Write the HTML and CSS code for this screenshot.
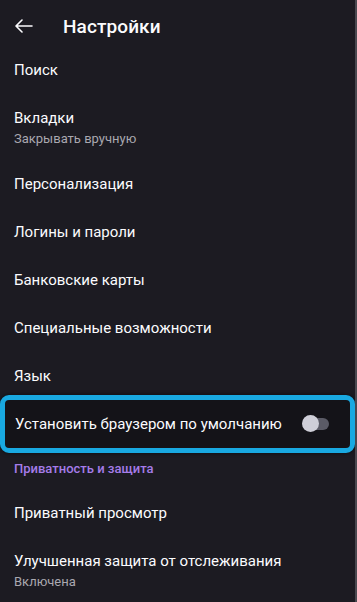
FILE: index.html
```html
<!DOCTYPE html>
<html lang="ru">
<head>
<meta charset="utf-8">
<link rel="stylesheet" href="styles.css">
</head>
<body>
<div class="screen">
  <header class="toolbar">
    <svg class="back" width="18" height="14" viewBox="0 0 18 14" fill="none" stroke="#fbfbfe" stroke-width="1.6" stroke-linecap="round" stroke-linejoin="round">
      <path d="M17 7H1.5M7 1L1 7l6 6"/>
    </svg>
    <h1 class="title">Настройки</h1>
  </header>
  <div class="list">
    <div class="item"><span class="label">Поиск</span></div>
    <div class="item two"><span class="label">Вкладки</span><span class="sub">Закрывать вручную</span></div>
    <div class="item"><span class="label">Персонализация</span></div>
    <div class="item"><span class="label">Логины и пароли</span></div>
    <div class="item"><span class="label">Банковские карты</span></div>
    <div class="item"><span class="label">Специальные возможности</span></div>
    <div class="item"><span class="label">Язык</span></div>
    <div class="item highlight"><span class="label">Установить браузером по умолчанию</span><span class="switch"><span class="track"></span><span class="thumb"></span></span></div>
    <div class="category">Приватность и защита</div>
    <div class="item"><span class="label">Приватный просмотр</span></div>
    <div class="item two"><span class="label">Улучшенная защита от отслеживания</span><span class="sub">Включена</span></div>
  </div>
</div>
</body>
</html>
```
FILE: styles.css
```css
* { box-sizing: border-box; }
html, body { margin: 0; padding: 0; background: #1c1b22; }
body { font-family: Roboto, "Noto Sans", sans-serif; color: #fbfbfe; width: 357px; height: 602px; overflow: hidden; }
.screen { width: 357px; height: 602px; border-right: 2px solid #4a4950; overflow: hidden; }
.toolbar { height: 46px; display: flex; align-items: center; padding-left: 15px; padding-top: 6px; }
.back { flex: none; }
.title { margin: 0 0 0 30px; font-size: 19px; font-weight: 500; letter-spacing: 0.1px; }
.list { display: flex; flex-direction: column; }
.item { height: 48px; display: flex; align-items: center; padding: 0 14px; font-size: 15px; }
.item.two { height: 66px; flex-direction: column; align-items: flex-start; justify-content: center; gap: 2px; }
.label { line-height: 20px; }
.sub { font-size: 13px; color: #a9a8b0; line-height: 17px; }
.highlight { justify-content: space-between; margin: -5px 0 -5px 0; padding: 0 20px 0 10px; height: 58px; border: 5px solid #19a9e1; border-radius: 9px; background: #141318; box-shadow: 0 0 4px rgba(0,0,0,0.6); position: relative; }
.switch { position: relative; width: 28px; height: 18px; display: block; }
.track { position: absolute; left: 6px; top: 3px; width: 21px; height: 12px; border-radius: 6px; background: #5b5b66; }
.thumb { position: absolute; left: 0; top: 0; width: 17px; height: 17px; border-radius: 50%; background: #cfcfd8; }
.category { height: 41px; padding: 13px 14px 0; font-size: 13px; font-weight: 500; color: #a57ce9; line-height: 16px; }
```
